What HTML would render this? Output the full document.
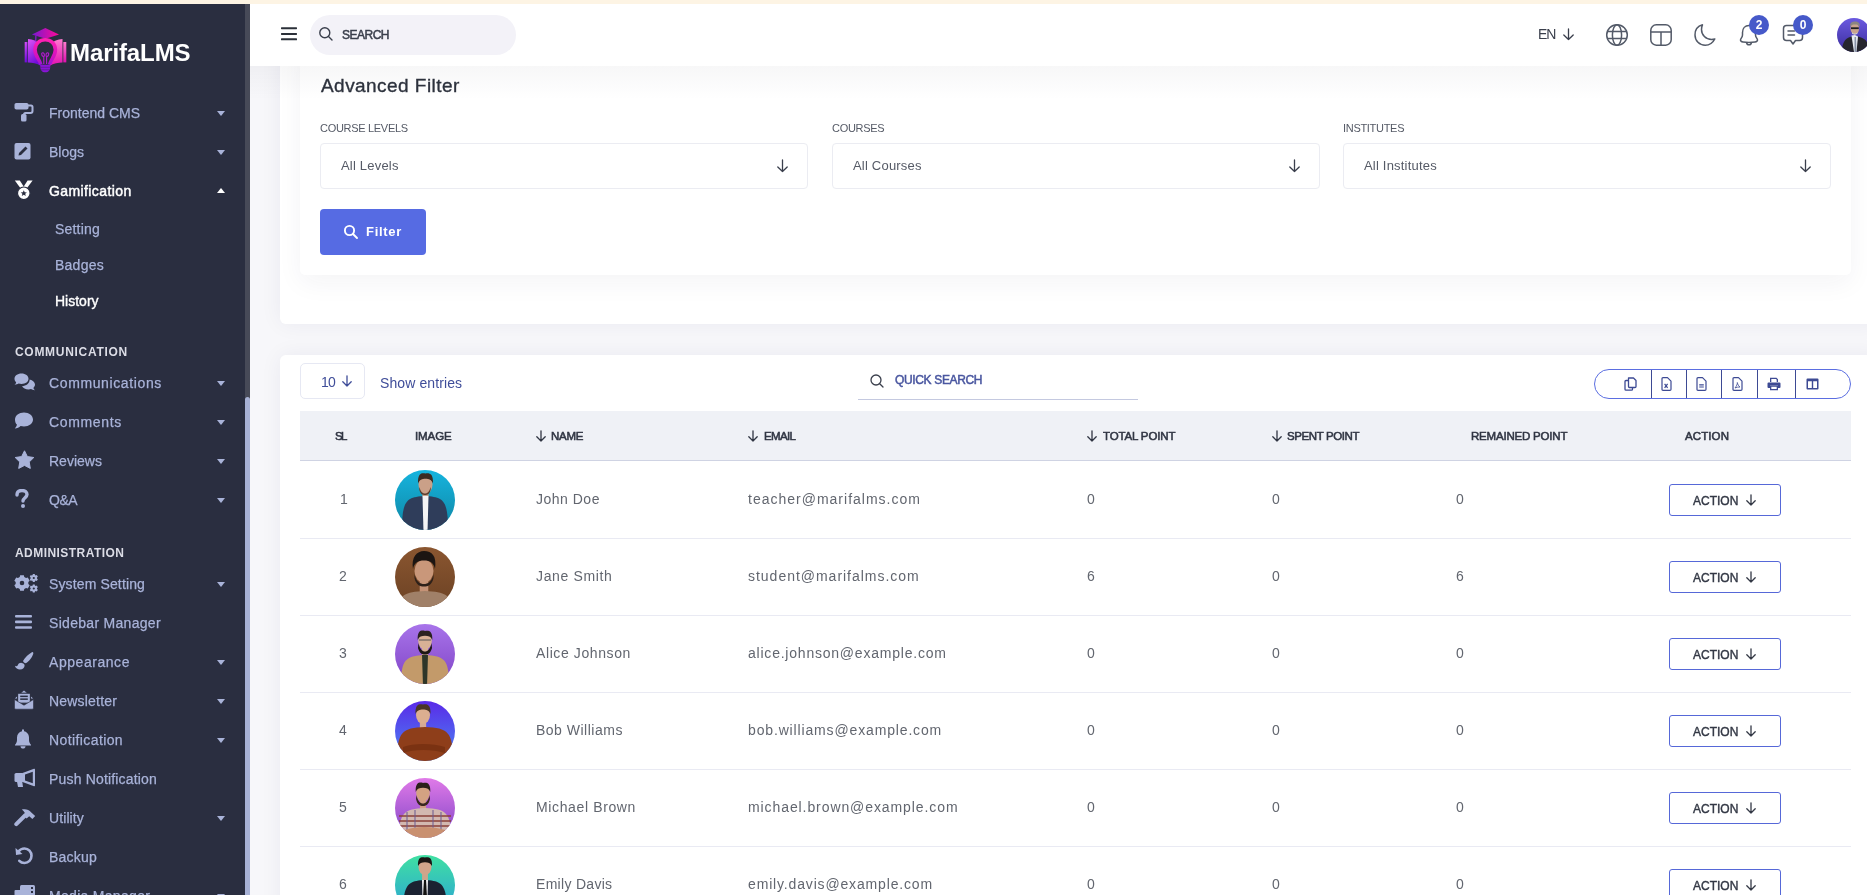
<!DOCTYPE html>
<html><head><meta charset="utf-8">
<style>
*{box-sizing:border-box;margin:0;padding:0}
html,body{width:1867px;height:895px;overflow:hidden;background:#f7f7fa;font-family:"Liberation Sans",sans-serif}
.a{position:absolute}
#root{position:absolute;left:0;top:0;width:1867px;height:895px;overflow:hidden;will-change:transform}
#topstrip{left:0;top:0;width:1867px;height:4px;background:#fdf4e4}
#sb{left:0;top:4px;width:250px;height:891px;background:#2a2e40;overflow:hidden}
#sbtrack{left:245px;top:0;width:5px;height:891px;background:#474a58}
#sbthumb{left:245px;top:393px;width:5px;height:520px;background:#a7b1d5;border-radius:3px}
.mi{position:absolute;left:49px;font-size:14px;color:#a9b3d9;white-space:nowrap;line-height:16px;-webkit-text-stroke:0.25px #a9b3d9}
.mi.act{color:#fff}
.sub{position:absolute;left:55px;font-size:14px;color:#a9b3d9;white-space:nowrap;line-height:16px;-webkit-text-stroke:0.25px #a9b3d9}
.sec{position:absolute;left:15px;font-size:12px;font-weight:bold;color:#dcdde6;letter-spacing:0.7px;line-height:14px}
.car{position:absolute;left:217px;width:0;height:0;border-left:4px solid transparent;border-right:4px solid transparent;border-top:5px solid #a9b3d9}
.ico{position:absolute;left:14px;width:22px;height:20px}
#hdr{left:250px;top:4px;width:1617px;height:62px;background:#fff}
#card1{left:280px;top:40px;width:1600px;height:284px;background:#fff;border-radius:6px;box-shadow:0 0 22px rgba(40,40,90,0.06)}
#card1in{left:300px;top:40px;width:1551px;height:235px;background:#fff;box-shadow:0 4px 24px rgba(20,20,60,0.04)}
#card2{left:280px;top:355px;width:1600px;height:560px;background:#fff;border-radius:6px;box-shadow:0 0 22px rgba(40,40,90,0.06)}
.lbl{position:absolute;font-size:11px;color:#555a66;line-height:13px;letter-spacing:-0.3px}
.sel{position:absolute;top:143px;height:46px;width:488px;border:1px solid #ebecf2;border-radius:4px;background:#fff}
.sel span{position:absolute;left:20px;top:14px;letter-spacing:0.2px;font-size:13px;color:#555a66;line-height:16px}
.sel svg{position:absolute;right:18px;top:15px}
.th{position:absolute;top:429px;font-size:11.5px;font-weight:normal;-webkit-text-stroke:0.55px #303543;color:#303543;line-height:14px;white-space:nowrap}
.td{position:absolute;font-size:14px;color:#62666f;line-height:16px;white-space:nowrap}
.rowline{position:absolute;left:300px;width:1551px;height:1px;background:#e9eaf3}
.act{}
.abtn{position:absolute;left:1669px;width:112px;height:32px;border:1px solid #5668d8;border-radius:3px;background:#fff}
.abtn span{position:absolute;left:23px;top:9px;font-size:12px;color:#333845;line-height:14px;-webkit-text-stroke:0.4px #333845}
.abtn svg{position:absolute;left:76px;top:9px}
.av{position:absolute;left:395px;width:60px;height:60px;border-radius:50%;overflow:hidden}
</style></head><body>
<div id="root">
<div class="a" id="topstrip"></div>
<div class="a" id="card1"></div>
<div class="a" style="left:300px;top:40px;width:1551px;height:235px;background:#fff;border-radius:5px;box-shadow:0 8px 26px rgba(30,30,70,0.05)"></div>
<div class="a" style="left:321px;top:75px;font-size:19px;color:#2d323d;line-height:22px;letter-spacing:0.45px;-webkit-text-stroke:0.35px #2d323d">Advanced Filter</div>
<div class="lbl" style="left:320px;top:122px">COURSE LEVELS</div>
<div class="lbl" style="left:832px;top:122px">COURSES</div>
<div class="lbl" style="left:1343px;top:122px">INSTITUTES</div>
<div class="sel" style="left:320px"><span>All Levels</span><svg width="13" height="14" viewBox="0 0 13 14" fill="none" stroke="#3a3f4c" stroke-width="1.3" stroke-linecap="round" stroke-linejoin="round"><path d="M6.5 1 V12.5 M1.8 8 L6.5 12.5 L11.2 8"/></svg></div>
<div class="sel" style="left:832px"><span>All Courses</span><svg width="13" height="14" viewBox="0 0 13 14" fill="none" stroke="#3a3f4c" stroke-width="1.3" stroke-linecap="round" stroke-linejoin="round"><path d="M6.5 1 V12.5 M1.8 8 L6.5 12.5 L11.2 8"/></svg></div>
<div class="sel" style="left:1343px"><span>All Institutes</span><svg width="13" height="14" viewBox="0 0 13 14" fill="none" stroke="#3a3f4c" stroke-width="1.3" stroke-linecap="round" stroke-linejoin="round"><path d="M6.5 1 V12.5 M1.8 8 L6.5 12.5 L11.2 8"/></svg></div>
<div class="a" style="left:320px;top:209px;width:106px;height:46px;border-radius:4px;background:#566be3"></div>
<svg class="a" style="left:343px;top:224px" width="16" height="16" viewBox="0 0 16 16" fill="none" stroke="#fff" stroke-width="1.9">
  <circle cx="6.5" cy="6.5" r="4.6"/><path d="M10 10 L14 14" stroke-linecap="round"/>
</svg>
<div class="a" style="left:366px;top:224px;font-size:13px;font-weight:bold;color:#fff;line-height:15px;letter-spacing:0.7px">Filter</div>

<div class="a" id="card2"></div>
<div class="a" style="left:300px;top:363px;width:65px;height:36px;border:1px solid #e6e8f3;border-radius:5px"></div>
<div class="a" style="left:321px;top:374px;font-size:14px;color:#3f4d99;line-height:16px;letter-spacing:-0.8px">10</div>
<svg class="a" style="left:341px;top:375px" width="12" height="12" viewBox="0 0 12 12" fill="none" stroke="#3f4d99" stroke-width="1.3" stroke-linecap="round" stroke-linejoin="round"><path d="M6 0.8 V11 M1.8 6.8 L6 11 L10.2 6.8"/></svg>
<div class="a" style="left:380px;top:375px;font-size:14px;color:#3f4d99;line-height:16px;letter-spacing:0.1px">Show entries</div>
<svg class="a" style="left:869px;top:373px" width="16" height="16" viewBox="0 0 16 16" fill="none" stroke="#3a3f4c" stroke-width="1.3"><circle cx="7" cy="7" r="5"/><path d="M10.7 10.7 L14 14" stroke-linecap="round"/></svg>
<div class="a" style="left:895px;top:373px;font-size:12px;color:#4a57a0;-webkit-text-stroke:0.5px #4a57a0;line-height:14px;letter-spacing:-0.35px">QUICK SEARCH</div>
<div class="a" style="left:858px;top:399px;width:280px;height:1px;background:#c4c9e0"></div>
<div class="a" style="left:1594px;top:369px;width:257px;height:30px;border:1px solid #5b6ee1;border-radius:15px"></div>
<div class="a" style="left:1651px;top:370px;width:1px;height:28px;background:#3d4a94"></div>
<div class="a" style="left:1686px;top:370px;width:1px;height:28px;background:#3d4a94"></div>
<div class="a" style="left:1721px;top:370px;width:1px;height:28px;background:#3d4a94"></div>
<div class="a" style="left:1757px;top:370px;width:1px;height:28px;background:#3d4a94"></div>
<div class="a" style="left:1795px;top:370px;width:1px;height:28px;background:#3d4a94"></div>
<svg class="a" style="left:1624px;top:377px" width="13" height="14" viewBox="0 0 13 14" fill="none" stroke="#3d4a94" stroke-width="1.3" stroke-linejoin="round"><path d="M4.5 1 H9.5 L12 3.5 V9.5 Q12 10.5 11 10.5 H5.5 Q4.5 10.5 4.5 9.5 Z"/><path d="M4.5 3.5 H2 Q1 3.5 1 4.5 V12.2 Q1 13.2 2 13.2 H7.5 Q8.5 13.2 8.5 12.2 V10.5"/></svg>
<svg class="a" style="left:1661px;top:377px" width="11" height="14" viewBox="0 0 11 14" fill="none" stroke="#3d4a94" stroke-width="1.2" stroke-linejoin="round"><path d="M1 1.8 Q1 0.7 2 0.7 H6.5 L10 4.2 V12.2 Q10 13.3 9 13.3 H2 Q1 13.3 1 12.2 Z"/><path d="M3.6 6.8 L6.6 10.8 M6.6 6.8 L3.6 10.8"/></svg>
<svg class="a" style="left:1696px;top:377px" width="11" height="14" viewBox="0 0 11 14" fill="none" stroke="#3d4a94" stroke-width="1.2" stroke-linejoin="round"><path d="M1 1.8 Q1 0.7 2 0.7 H6.5 L10 4.2 V12.2 Q10 13.3 9 13.3 H2 Q1 13.3 1 12.2 Z"/><path d="M3.2 7.8 H7.8 M3.2 10 H7.8"/></svg>
<svg class="a" style="left:1732px;top:377px" width="11" height="14" viewBox="0 0 11 14" fill="none" stroke="#3d4a94" stroke-width="1.2" stroke-linejoin="round"><path d="M1 1.8 Q1 0.7 2 0.7 H6.5 L10 4.2 V12.2 Q10 13.3 9 13.3 H2 Q1 13.3 1 12.2 Z"/><path d="M3 11 C4.5 9 5.5 7 5.3 5.5 C5.8 7.5 6.5 9 8 10 C6 10 4.5 10.2 3 11 Z" stroke-width="0.8"/></svg>
<svg class="a" style="left:1767px;top:377px" width="14" height="14" viewBox="0 0 14 14" fill="#3d4a94"><path d="M3 0.8 H9.5 L11 2.3 V5 H3 Z M4.3 2 V5 H9.7 V2.8 L9 2 Z" fill-rule="evenodd"/><path d="M1.5 5.5 H12.5 Q13.5 5.5 13.5 6.5 V10 Q13.5 11 12.5 11 H11 V8.5 H3 V11 H1.5 Q0.5 11 0.5 10 V6.5 Q0.5 5.5 1.5 5.5 Z"/><path d="M3 8.5 H11 V13.3 H3 Z M4.3 9.8 V12 H9.7 V9.8 Z" fill-rule="evenodd"/></svg>
<svg class="a" style="left:1806px;top:378px" width="13" height="12" viewBox="0 0 13 12"><path d="M0.5 1.5 Q0.5 0.5 1.5 0.5 H11.5 Q12.5 0.5 12.5 1.5 V10.5 Q12.5 11.5 11.5 11.5 H1.5 Q0.5 11.5 0.5 10.5 Z M2 3.3 V10 H5.8 V3.3 Z M7.2 3.3 V10 H11 V3.3 Z" fill="#3d4a94" fill-rule="evenodd"/></svg>
<div class="a" style="left:300px;top:411px;width:1551px;height:50px;background:#eff1f6;border-bottom:1px solid #cfd3e3"></div>
<div class="th" style="left:335px;letter-spacing:-1.6px">SL</div>
<div class="th" style="left:415px;letter-spacing:-0.1px">IMAGE</div>
<div class="th" style="left:551px;letter-spacing:-0.3px">NAME</div>
<div class="th" style="left:764px;letter-spacing:-0.65px">EMAIL</div>
<div class="th" style="left:1103px;letter-spacing:-0.15px">TOTAL POINT</div>
<div class="th" style="left:1287px;letter-spacing:-0.4px">SPENT POINT</div>
<div class="th" style="left:1471px;letter-spacing:-0.2px">REMAINED POINT</div>
<div class="th" style="left:1685px;letter-spacing:0.1px">ACTION</div>
<svg class="a" style="left:535px;top:430px" width="12" height="12" viewBox="0 0 12 12" fill="none" stroke="#303543" stroke-width="1.3" stroke-linecap="round" stroke-linejoin="round"><path d="M6 0.8 V11 M1.8 6.8 L6 11 L10.2 6.8"/></svg>
<svg class="a" style="left:747px;top:430px" width="12" height="12" viewBox="0 0 12 12" fill="none" stroke="#303543" stroke-width="1.3" stroke-linecap="round" stroke-linejoin="round"><path d="M6 0.8 V11 M1.8 6.8 L6 11 L10.2 6.8"/></svg>
<svg class="a" style="left:1086px;top:430px" width="12" height="12" viewBox="0 0 12 12" fill="none" stroke="#303543" stroke-width="1.3" stroke-linecap="round" stroke-linejoin="round"><path d="M6 0.8 V11 M1.8 6.8 L6 11 L10.2 6.8"/></svg>
<svg class="a" style="left:1271px;top:430px" width="12" height="12" viewBox="0 0 12 12" fill="none" stroke="#303543" stroke-width="1.3" stroke-linecap="round" stroke-linejoin="round"><path d="M6 0.8 V11 M1.8 6.8 L6 11 L10.2 6.8"/></svg>
<div class="td" style="left:340px;top:491px">1</div>
<div class="td" style="left:536px;top:491px;letter-spacing:0.5px">John Doe</div>
<div class="td" style="left:748px;top:491px;letter-spacing:1.0px">teacher@marifalms.com</div>
<div class="td" style="left:1087px;top:491px">0</div>
<div class="td" style="left:1272px;top:491px">0</div>
<div class="td" style="left:1456px;top:491px">0</div>
<div class="abtn" style="top:484px"><span>ACTION</span></div>
<svg class="a" style="left:1745px;top:494px" width="12" height="12" viewBox="0 0 12 12" fill="none" stroke="#333845" stroke-width="1.3" stroke-linecap="round" stroke-linejoin="round"><path d="M6 0.8 V11 M1.8 6.8 L6 11 L10.2 6.8"/></svg>
<div class="rowline" style="top:538px"></div>
<svg class="a" style="left:395px;top:470px" width="60" height="60" viewBox="0 0 60 60">
<defs><linearGradient id="g1" x1="0" y1="0" x2="0" y2="1"><stop offset="0" stop-color="#16b4de"/><stop offset="1" stop-color="#0f86a4"/></linearGradient>
<clipPath id="c1"><circle cx="30" cy="30" r="30"/></clipPath></defs>
<g clip-path="url(#c1)">
<rect width="60" height="60" fill="url(#g1)"/>
<rect x="27.35" y="20.2" width="6.3" height="9.8" fill="#caa088" opacity="0.95"/>
<path d="M7 62 C7 31 10.45 27 30 26 C49.55 27 53 31 53 62 Z" fill="#2f3d5a"/>
<path d="M27.5 26 L33.5 26 L32.5 62 L28.5 62 Z" fill="#f4f4f4"/>
<ellipse cx="30.5" cy="14.5" rx="7" ry="9.5" fill="#caa088"/>
<path d="M23.0 13.5 C22.5 2.0 27.7 3.0 30.5 3.5 C34.0 3.0 38.5 3.0 38.0 13.5 C36.5 9.75 34.0 8.8 30.5 8.8 C27.0 8.8 24.5 9.75 23.0 13.5 Z" fill="#3b2b22"/>
<path d="M24.5 17 C25.5 22 28 23.5 30 23.5 C32 23.5 34.5 22 35.5 17 L35.8 19 C35 24 32.5 25 30 25 C27.5 25 25 24 24.2 19 Z" fill="#5a3e30"/>
</g></svg>
<div class="td" style="left:339px;top:568px">2</div>
<div class="td" style="left:536px;top:568px;letter-spacing:0.65px">Jane Smith</div>
<div class="td" style="left:748px;top:568px;letter-spacing:0.98px">student@marifalms.com</div>
<div class="td" style="left:1087px;top:568px">6</div>
<div class="td" style="left:1272px;top:568px">0</div>
<div class="td" style="left:1456px;top:568px">6</div>
<div class="abtn" style="top:561px"><span>ACTION</span></div>
<svg class="a" style="left:1745px;top:571px" width="12" height="12" viewBox="0 0 12 12" fill="none" stroke="#333845" stroke-width="1.3" stroke-linecap="round" stroke-linejoin="round"><path d="M6 0.8 V11 M1.8 6.8 L6 11 L10.2 6.8"/></svg>
<div class="rowline" style="top:615px"></div>
<svg class="a" style="left:395px;top:547px" width="60" height="60" viewBox="0 0 60 60">
<defs><linearGradient id="g2" x1="0" y1="0" x2="0" y2="1"><stop offset="0" stop-color="#8a5630"/><stop offset="1" stop-color="#6c4224"/></linearGradient>
<clipPath id="c2"><circle cx="30" cy="30" r="30"/></clipPath></defs>
<g clip-path="url(#c2)">
<rect width="60" height="60" fill="url(#g2)"/>
<rect x="24.725" y="30.9" width="8.55" height="17.1" fill="#c9977a" opacity="0.95"/>
<path d="M4 62 C4 49 7.900000000000002 45 30 44 C52.099999999999994 45 56 49 56 62 Z" fill="#a08068"/>

<ellipse cx="29" cy="24" rx="9.5" ry="11.5" fill="#c9977a"/>
<path d="M18 22 C16 10 22 4 29 4 C37 4 42 9 40 22 C39 16 35 13.5 29 13.5 C23 13.5 19 16 18 22 Z" fill="#1c1512"/>
<path d="M19.5 27 C21 35 25.5 37 29 37 C32.5 37 37 35 38.5 27 L38.5 31 C37 38 33 39.5 29 39.5 C25 39.5 21 38 19.5 31 Z" fill="#2e211a"/>
</g></svg>
<div class="td" style="left:339px;top:645px">3</div>
<div class="td" style="left:536px;top:645px;letter-spacing:0.6px">Alice Johnson</div>
<div class="td" style="left:748px;top:645px;letter-spacing:0.78px">alice.johnson@example.com</div>
<div class="td" style="left:1087px;top:645px">0</div>
<div class="td" style="left:1272px;top:645px">0</div>
<div class="td" style="left:1456px;top:645px">0</div>
<div class="abtn" style="top:638px"><span>ACTION</span></div>
<svg class="a" style="left:1745px;top:648px" width="12" height="12" viewBox="0 0 12 12" fill="none" stroke="#333845" stroke-width="1.3" stroke-linecap="round" stroke-linejoin="round"><path d="M6 0.8 V11 M1.8 6.8 L6 11 L10.2 6.8"/></svg>
<div class="rowline" style="top:692px"></div>
<svg class="a" style="left:395px;top:624px" width="60" height="60" viewBox="0 0 60 60">
<defs><linearGradient id="g3" x1="0" y1="0" x2="0" y2="1"><stop offset="0" stop-color="#a874ea"/><stop offset="1" stop-color="#8044c6"/></linearGradient>
<clipPath id="c3"><circle cx="30" cy="30" r="30"/></clipPath></defs>
<g clip-path="url(#c3)">
<rect width="60" height="60" fill="url(#g3)"/>
<rect x="26.94" y="22.16" width="6.12" height="12.84" fill="#d8b196" opacity="0.95"/>
<path d="M6 62 C6 36 9.600000000000001 32 30 31 C50.4 32 54 36 54 62 Z" fill="#c39a6a"/>
<path d="M27 31 L33 31 L32 62 L28 62 Z" fill="#2e3628"/>
<ellipse cx="30" cy="17" rx="6.8" ry="8.6" fill="#d8b196"/>
<path d="M22.7 16 C22.2 5.4 27.28 6.4 30 6.9 C33.4 6.4 37.8 6.4 37.3 16 C35.8 12.7 33.4 11.84 30 11.84 C26.6 11.84 24.2 12.7 22.7 16 Z" fill="#2a2220"/>
<path d="M23.5 19 C24.5 25 27.5 27.5 30 27.5 C32.5 27.5 35.5 25 36.5 19 L37 24 C35.5 29.5 33 30.5 30 30.5 C27 30.5 24.5 29.5 23 24 Z" fill="#1e1814"/><rect x="24" y="15" width="12" height="2" fill="#555" opacity="0.5"/>
</g></svg>
<div class="td" style="left:339px;top:722px">4</div>
<div class="td" style="left:536px;top:722px;letter-spacing:0.5px">Bob Williams</div>
<div class="td" style="left:748px;top:722px;letter-spacing:0.85px">bob.williams@example.com</div>
<div class="td" style="left:1087px;top:722px">0</div>
<div class="td" style="left:1272px;top:722px">0</div>
<div class="td" style="left:1456px;top:722px">0</div>
<div class="abtn" style="top:715px"><span>ACTION</span></div>
<svg class="a" style="left:1745px;top:725px" width="12" height="12" viewBox="0 0 12 12" fill="none" stroke="#333845" stroke-width="1.3" stroke-linecap="round" stroke-linejoin="round"><path d="M6 0.8 V11 M1.8 6.8 L6 11 L10.2 6.8"/></svg>
<div class="rowline" style="top:769px"></div>
<svg class="a" style="left:395px;top:701px" width="60" height="60" viewBox="0 0 60 60">
<defs><linearGradient id="g4" x1="0" y1="0" x2="0" y2="1"><stop offset="0" stop-color="#5a2ae8"/><stop offset="1" stop-color="#4a88f4"/></linearGradient>
<clipPath id="c4"><circle cx="30" cy="30" r="30"/></clipPath></defs>
<g clip-path="url(#c4)">
<rect width="60" height="60" fill="url(#g4)"/>
<rect x="24.85" y="19.4" width="6.3" height="10.600000000000001" fill="#dcae90" opacity="0.95"/>
<path d="M2 62 C2 31 6.199999999999999 27 30 26 C53.8 27 58 31 58 62 Z" fill="#8e3e1a"/>

<ellipse cx="28" cy="14" rx="7" ry="9" fill="#dcae90"/>
<path d="M20.5 13 C20 2 25.2 3 28 3.5 C31.5 3 36 3 35.5 13 C34 9.5 31.5 8.600000000000001 28 8.600000000000001 C24.5 8.600000000000001 22 9.5 20.5 13 Z" fill="#4a3526"/>
<path d="M8 46 C18 42 38 42 50 46 L50 52 C38 48 18 48 8 52 Z" fill="#7a3212"/>
</g></svg>
<div class="td" style="left:339px;top:799px">5</div>
<div class="td" style="left:536px;top:799px;letter-spacing:0.63px">Michael Brown</div>
<div class="td" style="left:748px;top:799px;letter-spacing:0.91px">michael.brown@example.com</div>
<div class="td" style="left:1087px;top:799px">0</div>
<div class="td" style="left:1272px;top:799px">0</div>
<div class="td" style="left:1456px;top:799px">0</div>
<div class="abtn" style="top:792px"><span>ACTION</span></div>
<svg class="a" style="left:1745px;top:802px" width="12" height="12" viewBox="0 0 12 12" fill="none" stroke="#333845" stroke-width="1.3" stroke-linecap="round" stroke-linejoin="round"><path d="M6 0.8 V11 M1.8 6.8 L6 11 L10.2 6.8"/></svg>
<div class="rowline" style="top:846px"></div>
<svg class="a" style="left:395px;top:778px" width="60" height="60" viewBox="0 0 60 60">
<defs><linearGradient id="g5" x1="0" y1="0" x2="0" y2="1"><stop offset="0" stop-color="#e07ae8"/><stop offset="1" stop-color="#7e44c6"/></linearGradient>
<clipPath id="c5"><circle cx="30" cy="30" r="30"/></clipPath></defs>
<g clip-path="url(#c5)">
<rect width="60" height="60" fill="url(#g5)"/>
<rect x="24.94" y="20.16" width="6.12" height="13.84" fill="#d3a282" opacity="0.95"/>
<path d="M4 62 C4 35 7.900000000000002 31 30 30 C52.099999999999994 31 56 35 56 62 Z" fill="#d2b8b0"/>

<ellipse cx="28" cy="15" rx="6.8" ry="8.6" fill="#d3a282"/>
<path d="M20.7 14 C20.2 3.4000000000000004 25.28 4.4 28 4.9 C31.4 4.4 35.8 4.4 35.3 14 C33.8 10.7 31.4 9.84 28 9.84 C24.6 9.84 22.2 10.7 20.7 14 Z" fill="#2a201a"/>
<path d="M4 38 H56 M4 43 H56 M4 48 H56 M4 53 H56" stroke="#8a4038" stroke-width="1.6"/><path d="M12 34 V60 M20 32 V60 M38 32 V60 M46 34 V60" stroke="#6a5a90" stroke-width="1"/><path d="M10 52 C20 48 38 48 50 52 L50 60 L10 60 Z" fill="#c99070"/><path d="M21.5 17 C22.5 23 25.5 25.5 28 25.5 C30.5 25.5 33.5 23 34.5 17 L35 21 C33.5 27 31 28 28 28 C25 28 22.5 27 21 21 Z" fill="#3a2820"/>
</g></svg>
<div class="td" style="left:339px;top:876px">6</div>
<div class="td" style="left:536px;top:876px;letter-spacing:0.3px">Emily Davis</div>
<div class="td" style="left:748px;top:876px;letter-spacing:0.84px">emily.davis@example.com</div>
<div class="td" style="left:1087px;top:876px">0</div>
<div class="td" style="left:1272px;top:876px">0</div>
<div class="td" style="left:1456px;top:876px">0</div>
<div class="abtn" style="top:869px"><span>ACTION</span></div>
<svg class="a" style="left:1745px;top:879px" width="12" height="12" viewBox="0 0 12 12" fill="none" stroke="#333845" stroke-width="1.3" stroke-linecap="round" stroke-linejoin="round"><path d="M6 0.8 V11 M1.8 6.8 L6 11 L10.2 6.8"/></svg>
<svg class="a" style="left:395px;top:855px" width="60" height="60" viewBox="0 0 60 60">
<defs><linearGradient id="g6" x1="0" y1="0" x2="0" y2="1"><stop offset="0" stop-color="#40e0a2"/><stop offset="1" stop-color="#29a0d8"/></linearGradient>
<clipPath id="c6"><circle cx="30" cy="30" r="30"/></clipPath></defs>
<g clip-path="url(#c6)">
<rect width="60" height="60" fill="url(#g6)"/>
<rect x="27.075" y="16.8" width="5.8500000000000005" height="12.2" fill="#d1a48a" opacity="0.95"/>
<path d="M8 62 C8 30 11.3 26 30 25 C48.7 26 52 30 52 62 Z" fill="#1b2232"/>
<path d="M27 25 L33 25 L32 62 L28 62 Z" fill="#eeeef2"/>
<ellipse cx="30" cy="12" rx="6.5" ry="8" fill="#d1a48a"/>
<path d="M23.0 11 C22.5 1 27.4 2 30 2.5 C33.25 2 37.5 2 37.0 11 C35.5 8.0 33.25 7.2 30 7.2 C26.75 7.2 24.5 8.0 23.0 11 Z" fill="#1a1614"/>
<path d="M29 25 L31 25 L32 42 L30 45 L28 42 Z" fill="#111"/>
</g></svg>
<div class="a" id="hdr"></div>
<div class="a" style="left:250px;top:66px;width:1617px;height:34px;background:linear-gradient(rgba(30,30,50,0.035),rgba(30,30,50,0))"></div>
<svg class="a" style="left:280px;top:26px" width="18" height="16" viewBox="0 0 18 16" fill="#2b3039">
  <rect x="1" y="1.2" width="16" height="2" rx="0.6"/>
  <rect x="1" y="6.9" width="16" height="2" rx="0.6"/>
  <rect x="1" y="12.3" width="16" height="2" rx="0.6"/>
</svg>
<div class="a" style="left:310px;top:15px;width:206px;height:40px;border-radius:20px;background:#f3f2f8"></div>
<svg class="a" style="left:318px;top:26px" width="16" height="16" viewBox="0 0 16 16" fill="none" stroke="#3a3f4c" stroke-width="1.4">
  <circle cx="6.8" cy="6.8" r="5"/><path d="M10.5 10.5 L14 14" stroke-linecap="round"/>
</svg>
<div class="a" style="left:342px;top:28px;font-size:12px;color:#3a3f4c;-webkit-text-stroke:0.5px #3a3f4c;line-height:14px;letter-spacing:-0.5px">SEARCH</div>

<div class="a" style="left:1538px;top:26px;font-size:14px;color:#3a3f4c;line-height:16px;letter-spacing:-1px">EN</div>
<svg class="a" style="left:1562px;top:28px" width="13" height="13" viewBox="0 0 13 13" fill="none" stroke="#3a3f4c" stroke-width="1.3" stroke-linecap="round" stroke-linejoin="round">
  <path d="M6.5 1 V11.5 M1.8 7 L6.5 11.5 L11.2 7"/>
</svg>
<svg class="a" style="left:1605px;top:23px" width="24" height="24" viewBox="0 0 24 24" fill="none" stroke="#535a68" stroke-width="1.5">
  <circle cx="12" cy="12" r="10.3"/>
  <ellipse cx="12" cy="12" rx="4.6" ry="10.3"/>
  <path d="M2 8.5 H22 M2 15.5 H22"/>
</svg>
<svg class="a" style="left:1649px;top:23px" width="24" height="24" viewBox="0 0 24 24" fill="none" stroke="#535a68" stroke-width="1.5">
  <rect x="1.8" y="1.8" width="20.4" height="20.4" rx="5.5"/>
  <path d="M1.8 9 H22.2 M12 9 V22.2"/>
</svg>
<svg class="a" style="left:1693px;top:23px" width="24" height="24" viewBox="0 0 24 24" fill="none" stroke="#535a68" stroke-width="1.5" stroke-linejoin="round">
  <path d="M9.5 1.8 C5 3 2 7 2 12 C2 17.8 6.5 22.2 12.2 22.2 C16.5 22.2 20 19.6 21.8 16 C20.8 16.3 19.7 16.5 18.5 16.5 C12.9 16.5 8.5 12 8.5 6.5 C8.5 4.8 8.8 3.2 9.5 1.8 Z"/>
</svg>
<svg class="a" style="left:1737px;top:23px" width="24" height="24" viewBox="0 0 24 24" fill="none" stroke="#535a68" stroke-width="1.5" stroke-linejoin="round">
  <path d="M12 2.5 C8 2.5 5.5 5.5 5.5 9.5 V12 C5.5 14.5 3.5 15.5 3.5 17 C3.5 18 4.5 18.8 6 19 C10 19.5 14 19.5 18 19 C19.5 18.8 20.5 18 20.5 17 C20.5 15.5 18.5 14.5 18.5 12 V9.5 C18.5 5.5 16 2.5 12 2.5 Z"/>
  <path d="M9.5 19.5 C9.8 21 10.8 21.8 12 21.8 C13.2 21.8 14.2 21 14.5 19.5"/>
</svg>
<svg class="a" style="left:1781px;top:23px" width="24" height="24" viewBox="0 0 24 24" fill="none" stroke="#535a68" stroke-width="1.5" stroke-linejoin="round" stroke-linecap="round">
  <path d="M5.5 2.5 H18.5 C20.5 2.5 21.5 3.5 21.5 5.5 V14.5 C21.5 16.5 20.5 17.5 18.5 17.5 H14.5 L12 21 L9.5 17.5 H5.5 C3.5 17.5 2.5 16.5 2.5 14.5 V5.5 C2.5 3.5 3.5 2.5 5.5 2.5 Z"/>
  <path d="M7 8 H13.5 M7 12 H13.5"/>
</svg>
<div class="a" style="left:1749px;top:15px;width:20px;height:20px;border-radius:50%;background:#4659c9;color:#fff;font-size:12px;font-weight:bold;text-align:center;line-height:20px">2</div>
<div class="a" style="left:1793px;top:15px;width:20px;height:20px;border-radius:50%;background:#4659c9;color:#fff;font-size:12px;font-weight:bold;text-align:center;line-height:20px">0</div>
<svg class="a" style="left:1837px;top:18px" width="34" height="34" viewBox="0 0 34 34">
  <defs><linearGradient id="avh" x1="0" y1="0" x2="0" y2="1"><stop offset="0" stop-color="#6b5ae0"/><stop offset="1" stop-color="#3a2c9c"/></linearGradient>
  <clipPath id="cph"><circle cx="17" cy="17" r="17"/></clipPath></defs>
  <g clip-path="url(#cph)">
    <rect width="34" height="34" fill="url(#avh)"/>
    <path d="M5 34 C5 25 8 20.5 13 19 L18 17.5 L24 19.5 C29 21 32 25 32 34 Z" fill="#26262e"/>
    <path d="M14.5 17.5 L18 17 L21 18.5 L19.5 34 L17 34 Z" fill="#e8ecf2"/>
    <path d="M17.5 19 L19 19 L19.5 34 L17.5 34 Z" fill="#8a94a8"/>
    <ellipse cx="17.8" cy="10.5" rx="4.3" ry="5.6" fill="#c9a48c"/>
    <path d="M13 9 C12.5 4.5 15.5 3.5 18 3.5 C21 3.5 23.5 5 22.8 9 C22 7 20.5 6.5 18 6.5 C15.5 6.5 13.8 7 13 9 Z" fill="#8a8580"/>
    <rect x="14" y="9.3" width="7.8" height="1.8" fill="#1e1e22"/>
    <path d="M15 14 C16 16 19.5 16 20.5 14 L20.5 15.5 C19.5 17 16 17 15 15.5 Z" fill="#d8d8d8"/>
  </g>
</svg>

<div class="a" id="sb">
  <div class="a" id="sbtrack"></div>
  <div class="a" id="sbthumb"></div>
</div>
<!-- logo -->
<svg class="a" style="left:22px;top:26px" width="48" height="48" viewBox="0 0 48 48">
  <defs>
    <linearGradient id="lgL" x1="0" y1="0" x2="0.4" y2="1"><stop offset="0" stop-color="#dd55f7"/><stop offset="1" stop-color="#6e0cd8"/></linearGradient>
    <linearGradient id="lgR" x1="0" y1="0" x2="0" y2="1"><stop offset="0" stop-color="#ff7ad0"/><stop offset="1" stop-color="#e010b0"/></linearGradient>
    <linearGradient id="lgC" x1="0" y1="0" x2="1" y2="0"><stop offset="0" stop-color="#7818d0"/><stop offset="1" stop-color="#ff0a98"/></linearGradient>
    <linearGradient id="lgB" x1="0" y1="0" x2="0" y2="1"><stop offset="0" stop-color="#ff20b4"/><stop offset="0.7" stop-color="#d010c0"/><stop offset="1" stop-color="#9a16d8"/></linearGradient>
  </defs>
  <rect x="2.7" y="16" width="2.7" height="20.4" fill="url(#lgL)"/>
  <rect x="41.3" y="16" width="3" height="20.4" fill="url(#lgR)"/>
  <path d="M6 13 C11 13.2 15 15 18 18 L19 40 C15 37.5 10 36.6 6 36.6 Z" fill="url(#lgL)"/>
  <path d="M40.5 13 C35.5 13.2 31.5 15 28.5 18 L27.5 40 C31.5 37.5 36.5 36.6 40.5 36.6 Z" fill="url(#lgR)"/>
  <path d="M23.3 2 L37 8.5 L23.6 12.8 L9.9 8.5 Z" fill="url(#lgC)"/>
  <path d="M13.9 9.6 L13.7 15.4" stroke="#8a18d0" stroke-width="1.3"/>
  <path d="M18.8 38.5 C17.8 33.5 13 30.5 13 23.8 C13 17.8 17.6 13.8 23.2 13.8 C28.8 13.8 33.4 17.8 33.4 23.8 C33.4 30.5 28.6 33.5 27.6 38.5" fill="#2a2e40" stroke="url(#lgB)" stroke-width="3.6"/>
  <path d="M21.8 38 V31 M24.6 38 V31 M21.8 31 C18.5 29.5 19.5 26 21.5 27 C22.8 27.8 22.5 30 21.8 31 M24.6 31 C27.9 29.5 26.9 26 24.9 27 C23.6 27.8 23.9 30 24.6 31" stroke="#b41ad0" stroke-width="1.1" fill="none"/>
  <path d="M18.3 38.7 H28.2 V41 C28.2 44 26.5 46.3 23.2 46.3 C20 46.3 18.3 44 18.3 41 Z" fill="#8a14d8"/>
  <path d="M18.5 41.3 H28 M19 43.8 H27.5" stroke="#2a2e40" stroke-width="0.7" opacity="0.55"/>
</svg>
<div class="a" style="left:70px;top:39.5px;font-size:24px;font-weight:bold;color:#fff;line-height:26px;letter-spacing:-0.1px">MarifaLMS</div>

<!-- menu items -->
<div class="mi" style="top:105px">Frontend CMS</div>
<div class="mi" style="top:144px">Blogs</div>
<div class="mi act" style="top:183px;-webkit-text-stroke:0.45px #fff;letter-spacing:0.4px">Gamification</div>
<div class="sub" style="top:221px;letter-spacing:0.2px">Setting</div>
<div class="sub" style="top:257px;letter-spacing:0.25px">Badges</div>
<div class="sub" style="top:293px;color:#fff;-webkit-text-stroke:0.35px #fff">History</div>
<div class="sec" style="top:345px">COMMUNICATION</div>
<div class="mi" style="top:375px;letter-spacing:0.62px">Communications</div>
<div class="mi" style="top:414px;letter-spacing:0.66px">Comments</div>
<div class="mi" style="top:453px;letter-spacing:0px">Reviews</div>
<div class="mi" style="top:492px;letter-spacing:-0.5px">Q&amp;A</div>
<div class="sec" style="top:546px;letter-spacing:0.45px">ADMINISTRATION</div>
<div class="mi" style="top:576px;letter-spacing:0.13px">System Setting</div>
<div class="mi" style="top:615px;letter-spacing:0.3px">Sidebar Manager</div>
<div class="mi" style="top:654px;letter-spacing:0.55px">Appearance</div>
<div class="mi" style="top:693px;letter-spacing:0.2px">Newsletter</div>
<div class="mi" style="top:732px;letter-spacing:0.4px">Notification</div>
<div class="mi" style="top:771px;letter-spacing:0.17px">Push Notification</div>
<div class="mi" style="top:810px;letter-spacing:0.1px">Utility</div>
<div class="mi" style="top:849px;letter-spacing:0.2px">Backup</div>
<div class="mi" style="top:888px;letter-spacing:0.3px">Media Manager</div>

<!-- carets -->
<div class="car" style="top:111px"></div>
<div class="car" style="top:150px"></div>
<div class="car" style="top:188px;border-top:0;border-bottom:5px solid #fff"></div>
<div class="car" style="top:381px"></div>
<div class="car" style="top:420px"></div>
<div class="car" style="top:459px"></div>
<div class="car" style="top:498px"></div>
<div class="car" style="top:582px"></div>
<div class="car" style="top:660px"></div>
<div class="car" style="top:699px"></div>
<div class="car" style="top:738px"></div>
<div class="car" style="top:816px"></div>
<div class="car" style="top:894px"></div>

<!-- icons -->
<svg class="a" style="left:14px;top:102px" width="20" height="20" viewBox="0 0 20 20" fill="#a9b3d9">
  <rect x="0.5" y="1" width="14" height="6.5" rx="1.8"/>
  <path d="M14 3.5 H17 Q18.5 3.5 18.5 5 V9 Q18.5 11 16.5 11 H11.5 Q10 11 10 12.5 V13" fill="none" stroke="#a9b3d9" stroke-width="2"/>
  <rect x="7" y="12" width="5.5" height="7.5" rx="1.5"/>
</svg>
<svg class="a" style="left:14px;top:142px" width="20" height="20" viewBox="0 0 20 20">
  <rect x="0.5" y="1" width="16" height="16.5" rx="2" fill="#a9b3d9"/>
  <path d="M4.5 13.5 L5 11 L11.5 4.5 L13.5 6.5 L7 13 Z" fill="#2a2e40"/>
</svg>
<svg class="a" style="left:14px;top:180px" width="20" height="20" viewBox="0 0 20 20">
  <path d="M0.8 0.6 H5.8 L10 7 L7.5 9.5 Z" fill="#fff"/>
  <path d="M18.6 0.6 H13.6 L9.4 7 L11.9 9.5 Z" fill="#fff"/>
  <circle cx="9.8" cy="13.3" r="6.3" fill="#fff" stroke="#2a2e40" stroke-width="1.2"/>
  <path d="M9.8 10.2 L10.7 12.3 L12.9 12.4 L11.2 13.8 L11.8 16 L9.8 14.8 L7.8 16 L8.4 13.8 L6.7 12.4 L8.9 12.3 Z" fill="#2a2e40"/>
</svg>
<svg class="a" style="left:14px;top:373px" width="22" height="18" viewBox="0 0 22 18" fill="#a9b3d9">
  <path d="M7.5 0.5 C11.6 0.5 14.5 2.8 14.5 5.8 C14.5 8.8 11.6 11 7.5 11 C6.5 11 5.5 10.9 4.6 10.6 C3.6 11.3 2.2 11.8 0.5 11.8 C1.4 11 2 10.2 2.2 9.4 C1.1 8.4 0.5 7.2 0.5 5.8 C0.5 2.8 3.4 0.5 7.5 0.5 Z"/>
  <path d="M15.6 6.5 C18.8 7.2 21 9.2 21 11.6 C21 12.9 20.4 14 19.4 14.9 C19.6 15.7 20.2 16.5 21 17.2 C19.4 17.2 18.1 16.7 17.1 16 C16.3 16.2 15.5 16.4 14.6 16.4 C11.6 16.4 9.1 15.1 8 13.2 C12.3 12.9 15.6 10.2 15.6 6.7 Z"/>
</svg>
<svg class="a" style="left:14px;top:412px" width="20" height="18" viewBox="0 0 20 18" fill="#a9b3d9">
  <path d="M10 0.5 C15 0.5 19 3.6 19 7.6 C19 11.5 15 14.6 10 14.6 C8.8 14.6 7.7 14.4 6.6 14.1 C5.2 15.3 3.2 16.5 0.8 16.5 C1.8 15.5 2.6 14.2 3 12.8 C1.6 11.5 1 9.7 1 7.6 C1 3.6 5 0.5 10 0.5 Z"/>
</svg>
<svg class="a" style="left:14px;top:450px" width="21" height="20" viewBox="0 0 21 20" fill="#a9b3d9">
  <path d="M10.5 0.8 L13.4 6.6 L19.8 7.5 L15.2 12 L16.3 18.4 L10.5 15.4 L4.7 18.4 L5.8 12 L1.2 7.5 L7.6 6.6 Z" stroke="#a9b3d9" stroke-width="1" stroke-linejoin="round"/>
</svg>
<svg class="a" style="left:14px;top:489px" width="16" height="20" viewBox="0 0 16 20" fill="none">
  <path d="M3 6 C3 2.5 5.5 1.5 8 1.5 C11 1.5 13 3.2 13 5.6 C13 8.5 9 9 9 12" stroke="#a9b3d9" stroke-width="3.4" stroke-linecap="round"/>
  <circle cx="9" cy="17" r="2" fill="#a9b3d9"/>
</svg>
<svg class="a" style="left:14px;top:573px" width="24" height="20" viewBox="0 0 24 20" fill="#a9b3d9" fill-rule="evenodd">
  <path d="M10.26 15.99 L9.87 17.78 L6.13 17.78 L5.74 15.99 L3.95 14.95 L2.20 15.51 L0.33 12.27 L1.68 11.03 L1.68 8.97 L0.33 7.73 L2.20 4.49 L3.95 5.05 L5.74 4.01 L6.13 2.22 L9.87 2.22 L10.26 4.01 L12.05 5.05 L13.80 4.49 L15.67 7.73 L14.32 8.97 L14.32 11.03 L15.67 12.27 L13.80 15.51 L12.05 14.95 Z M10.30 10.00 A2.3 2.3 0 1 0 5.70 10.00 A2.3 2.3 0 1 0 10.30 10.00 Z"/>
  <path d="M20.93 7.99 L20.78 9.08 L18.82 9.08 L18.67 7.99 L17.77 7.48 L16.75 7.89 L15.77 6.19 L16.64 5.52 L16.64 4.48 L15.77 3.81 L16.75 2.11 L17.77 2.52 L18.67 2.01 L18.82 0.92 L20.78 0.92 L20.93 2.01 L21.83 2.52 L22.85 2.11 L23.83 3.81 L22.96 4.48 L22.96 5.52 L23.83 6.19 L22.85 7.89 L21.83 7.48 Z M20.90 5.00 A1.1 1.1 0 1 0 18.70 5.00 A1.1 1.1 0 1 0 20.90 5.00 Z"/>
  <path d="M20.93 18.49 L20.78 19.58 L18.82 19.58 L18.67 18.49 L17.77 17.98 L16.75 18.39 L15.77 16.69 L16.64 16.02 L16.64 14.98 L15.77 14.31 L16.75 12.61 L17.77 13.02 L18.67 12.51 L18.82 11.42 L20.78 11.42 L20.93 12.51 L21.83 13.02 L22.85 12.61 L23.83 14.31 L22.96 14.98 L22.96 16.02 L23.83 16.69 L22.85 18.39 L21.83 17.98 Z M20.90 15.50 A1.1 1.1 0 1 0 18.70 15.50 A1.1 1.1 0 1 0 20.90 15.50 Z"/>
</svg>
<svg class="a" style="left:15px;top:613px" width="18" height="18" viewBox="0 0 18 18" fill="#a9b3d9">
  <rect x="0" y="2" width="17" height="2.6" rx="1"/>
  <rect x="0" y="7.6" width="17" height="2.6" rx="1"/>
  <rect x="0" y="13.2" width="17" height="2.6" rx="1"/>
</svg>
<svg class="a" style="left:14px;top:651px" width="20" height="20" viewBox="0 0 20 20" fill="#a9b3d9">
  <path d="M17.9 1.2 C19 0.8 19.6 1.8 19.2 3 C18 6.5 15 10.5 11.8 12.2 C10.4 11.9 9.3 11.1 9 10 C10.8 6.8 14.5 3 17.9 1.2 Z"/>
  <path d="M10.6 14.2 C10.6 16.6 9 18.4 6 18.4 C3.6 18.4 1.6 17.4 0.9 14.8 C2 15.5 3.2 15.3 3.8 14.2 C4.5 12.4 6 11.7 7.6 11.9 C9.2 12.2 10.6 12.9 10.6 14.2 Z"/>
</svg>
<svg class="a" style="left:14px;top:690px" width="20" height="20" viewBox="0 0 20 20" fill="#a9b3d9">
  <path d="M0.8 8.5 L10 0.6 L19.2 8.5 Z"/>
  <rect x="3.6" y="3.2" width="12.8" height="10" fill="#a9b3d9" stroke="#2a2e40" stroke-width="1.1"/>
  <rect x="6.2" y="5.6" width="7.6" height="1.5" fill="#2a2e40"/>
  <rect x="6.2" y="8.4" width="7.6" height="1.5" fill="#2a2e40"/>
  <path d="M0.5 9.5 L10 15.2 L19.5 9.5 V18 Q19.5 19.2 18.3 19.2 H1.7 Q0.5 19.2 0.5 18 Z" stroke="#2a2e40" stroke-width="0.6"/>
</svg>
<svg class="a" style="left:14px;top:729px" width="18" height="20" viewBox="0 0 18 20" fill="#a9b3d9">
  <path d="M8 0.5 H10 V2.2 C13 2.8 15 5.4 15 8.5 V11 C15 13 16 14.8 17 15.8 V16.5 H1 V15.8 C2 14.8 3 13 3 11 V8.5 C3 5.4 5 2.8 8 2.2 Z"/>
  <path d="M6.5 17.3 H11.5 C11.5 18.7 10.4 19.6 9 19.6 C7.6 19.6 6.5 18.7 6.5 17.3 Z"/>
</svg>
<svg class="a" style="left:14px;top:768px" width="22" height="20" viewBox="0 0 22 20" fill="#a9b3d9">
  <path d="M8.5 5 L20 0.8 Q21 0.5 21 1.5 V17.5 Q21 18.5 20 18.2 L8.5 14 Z"/>
  <path d="M11 6.6 L18.8 3.8 V15.2 L11 12.4 Z" fill="#2a2e40"/>
  <rect x="0.5" y="5" width="9.5" height="9" rx="1.6"/>
  <path d="M3 13.5 H8.2 L9 19 H4 Z"/>
</svg>
<svg class="a" style="left:14px;top:807px" width="22" height="20" viewBox="0 0 22 20" fill="#a9b3d9">
  <path d="M2.3 17.2 L11.5 8" stroke="#a9b3d9" stroke-width="4" stroke-linecap="round"/>
  <path d="M7.8 2.6 C11 1.6 14.8 2.2 17.3 5.6 L21.2 9 L18.4 12 L15.2 9.3 L12.6 11.6 L9.6 8.8 L11 6.2 C10 4.6 9 3.6 7.8 2.6 Z"/>
</svg>
<svg class="a" style="left:14px;top:846px" width="20" height="20" viewBox="0 0 20 20" fill="none">
  <path d="M4.5 5.5 C6 3.5 8 2.5 10.5 2.5 C14.5 2.5 17.5 5.8 17.5 9.8 C17.5 13.8 14.5 17 10.5 17 C8.5 17 6.6 16.2 5.3 14.8" stroke="#a9b3d9" stroke-width="2.6" stroke-linecap="round"/>
  <path d="M1.5 2 L2 9 L8.5 8 Z" fill="#a9b3d9"/>
</svg>
<svg class="a" style="left:14px;top:884px" width="22" height="14" viewBox="0 0 22 14" fill="#a9b3d9">
  <rect x="6" y="1" width="15" height="12" rx="1.5"/>
  <rect x="0.5" y="6" width="14" height="8" rx="1"/>
  <rect x="17" y="3" width="2" height="2" fill="#2a2e40"/>
  <rect x="17" y="7" width="2" height="2" fill="#2a2e40"/>
</svg>

</div>
</body></html>
